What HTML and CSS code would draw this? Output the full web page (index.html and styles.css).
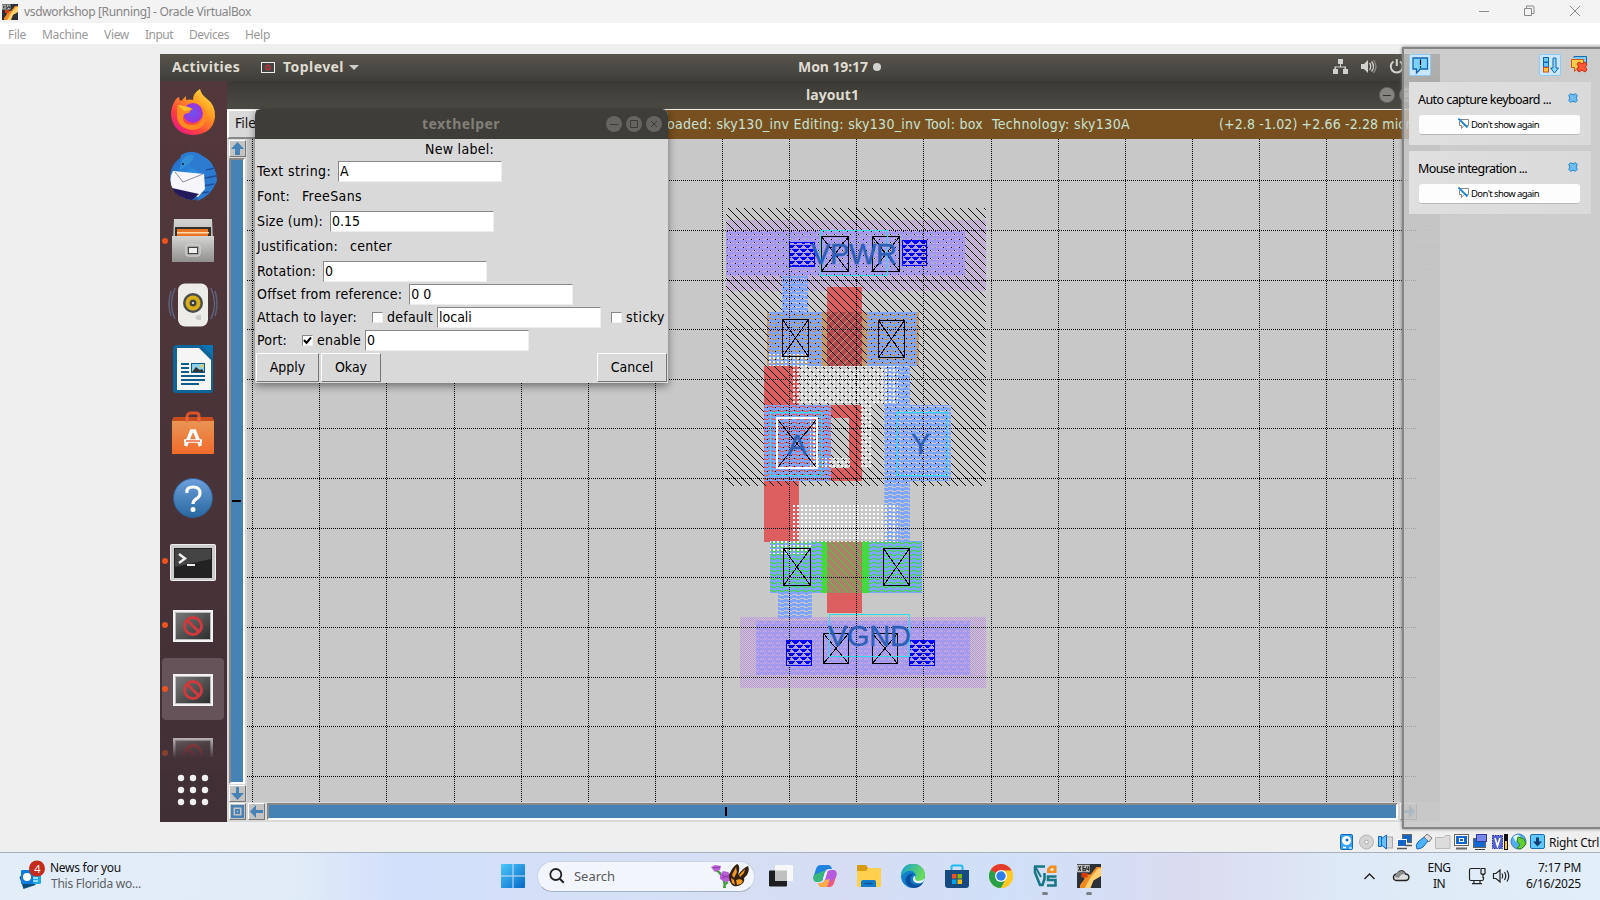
FILE: index.html
```html
<!DOCTYPE html>
<html lang="en">
<head>
<meta charset="utf-8">
<title>vsdworkshop [Running] - Oracle VirtualBox</title>
<link rel="stylesheet" href="styles.css">
</head>
<body>
<header class="titlebar">
  <svg class="app-icon" viewBox="0 0 16 16"><use href="#vm-icon"/></svg>
  <span class="title-text" data-w="227">vsdworkshop [Running] - Oracle VirtualBox</span>
  <svg class="win-controls" viewBox="0 0 120 22" fill="none" stroke="#8a8a8a"><path d="M9 10.500h10M54.500 7.500h7v7h-7zM56.500 7v-2h6.500q1 0 1 1v6.500h-2M100 5l10 10M110 5l-10 10"/></svg>
</header>
<nav class="menubar">
  <span data-w="18">File</span><span data-w="46">Machine</span><span data-w="25">View</span><span data-w="28">Input</span><span data-w="40">Devices</span><span data-w="25">Help</span>
</nav>
<main class="work">
  <section class="guest">
    <div class="gnome-bar">
      <span class="g-act" data-w="68">Activities</span>
      <svg class="g-app" viewBox="0 0 14 11"><rect x=".5" y=".5" width="13" height="10" fill="#444" stroke="#eee"/><circle cx="7" cy="5.500" r="2.500" fill="none" stroke="#d33"/><path d="M5.300 3.800l3.400 3.400" stroke="#d33"/></svg>
      <span class="g-top" data-w="61">Toplevel</span>
      <svg class="g-caret" viewBox="0 0 10 6"><path d="M0 0h10l-5 5z" fill="#ccc"/></svg>
      <span class="g-clock" data-w="70">Mon 19:17</span>
      <i class="g-dot"></i>
      <svg class="g-status" viewBox="0 0 80 20" fill="#d2d2cc"><path d="M6 2h5v5h-5zM1 12h5v5h-5zM11 12h5v5h-5zM8 7h1v2.500h5V12h-1.500v-1.500H4V12H2.500V9.500H8zM29 7h3l4-4v13l-4-4h-3z"/><path d="M37.500 6q2.500 3.500 0 7M39.500 4.500q4 5 0 10" fill="none" stroke="#d2d2cc" stroke-width="1.300"/><path d="M41.500 3q5 6.500 0 13" fill="none" stroke="#8c8c86" stroke-width="1.200"/><path d="M61.500 4.500a6 6 0 1 0 6.500 0" fill="none" stroke="#d2d2cc" stroke-width="2"/><path d="M63.800 2h2v7h-2z"/></svg>
    </div>
    <div class="guest-body">
      <aside class="dock">
        <svg viewBox="160 81 67 741" width="67" height="741">
          <defs>
            <linearGradient id="ff" x1="1" y1="0" x2=".2" y2="1"><stop offset="0" stop-color="#fff44f"/><stop offset=".4" stop-color="#ff9a20"/><stop offset=".75" stop-color="#ff4040"/><stop offset="1" stop-color="#e31587"/></linearGradient>
            <radialGradient id="fp"><stop offset="0" stop-color="#6a55f0"/><stop offset="1" stop-color="#a030d8"/></radialGradient>
            <linearGradient id="tb" x1="0" y1="0" x2="1" y2="1"><stop offset="0" stop-color="#1f5fc4"/><stop offset=".5" stop-color="#2d92e0"/><stop offset="1" stop-color="#1b3f94"/></linearGradient>
            <linearGradient id="gr" x1="0" y1="0" x2="0" y2="1"><stop offset="0" stop-color="#d4d4d2"/><stop offset="1" stop-color="#90908e"/></linearGradient>
            <linearGradient id="or" x1="0" y1="0" x2="0" y2="1"><stop offset="0" stop-color="#e89a58"/><stop offset="1" stop-color="#f06a2c"/></linearGradient>
            <linearGradient id="hb" x1="0" y1="0" x2="0" y2="1"><stop offset="0" stop-color="#6e9fdc"/><stop offset="1" stop-color="#27689f"/></linearGradient>
            <linearGradient id="dk" x1="0" y1="0" x2="1" y2="1"><stop offset="0" stop-color="#7a7a7a"/><stop offset="1" stop-color="#2c2c2c"/></linearGradient>
            <linearGradient id="fade" x1="0" y1="0" x2="0" y2="1"><stop offset="0" stop-color="#46323a" stop-opacity="0.100"/><stop offset="1" stop-color="#46323a"/></linearGradient>
            <g id="broken"><rect width="40" height="32" fill="#f2f2f2"/><rect x="2.500" y="2.500" width="35" height="27" fill="url(#dk)" stroke="#bbb"/><circle cx="20" cy="16" r="8.500" fill="none" stroke="#cf3a3e" stroke-width="3"/><path d="M14 10l12 12" stroke="#cf3a3e" stroke-width="3"/></g>
          </defs>
          <path d="M176 99q2-2 3-2 0 3 2 4l5-5v4q4-1 7 0 0-7 7-11 1 5 6 9 10 7 9 19-2 17-22 18-20-1-22-20 0-9 5-16z" fill="url(#ff)"/>
          <circle cx="193" cy="113" r="10" fill="url(#fp)"/>
          <path d="M177 107q7-3 16 2-3 1-4 4-5 0-6 4 0 9 11 8 10-2 9-12-1-6-5-9 8 3 9 11-1 14-15 15-15-2-15-15z" fill="#ff8a22"/>
          <path d="M177 105q7 0 15 4-3 2-8 2z" fill="#ffc02c"/>
          <circle cx="193" cy="177" r="23" fill="url(#tb)"/>
          <path d="M181 155q13-8 24 3 12 9 12 23-7 16-20 20 6-12 5-22-6-13-22-15z" fill="#2c7bd0"/>
          <path d="M206 170l9-2M205 178l11-2M203 186l11-2M201 193l8-1" stroke="#1c4f9d" stroke-width="1.500"/>
          <path d="M173 171l31 3 1 15-7 8-25-8q-5-9 0-18z" fill="#f6f6fa"/><path d="M175 172l8 10 20-8" fill="none" stroke="#8b90a3"/><path d="M172 188q5 10 20 12l7-6z" fill="#231a5c"/>
          <path d="M182 160q5-6 12-5-1 7-8 11l-7 5z" fill="#338fd6"/><circle cx="183" cy="164" r="1" fill="#123"/>
          <path d="M174 219h38l2 43h-42z" fill="url(#gr)"/><rect x="175" y="227" width="36" height="9" fill="#34302c"/><path d="M177 229h31v7h-31z" fill="#e87426"/><path d="M177 232h32v1.500h-32z" fill="#ffd9a8"/><path d="M172 236h42v26h-42z" fill="url(#gr)"/><rect x="186" y="245" width="14" height="11" rx="2" fill="#a5a5a3" stroke="#ddd"/><rect x="188.500" y="247.500" width="9" height="6" fill="#eee" stroke="#444"/>
          <g fill="none" stroke="#5d6079" stroke-width="1.500"><path d="M175 288q-7 16 0 31M171 291q-4 13 0 25M211 288q7 16 0 31M215 291q4 13 0 25"/></g>
          <rect x="178" y="283.500" width="30" height="43" rx="7" fill="#ecece8"/><circle cx="193" cy="303" r="10" fill="#4c4d4e"/><circle cx="193" cy="303" r="7.500" fill="#d9b116"/><circle cx="193" cy="303" r="3.500" fill="#444"/><circle cx="193" cy="303" r="1" fill="#fff"/><path d="M195 317q3-3 6-2v5q-4 1-6-3z" fill="#ccc"/>
          <path d="M176 345h25l12 12v33q0 3-3 3h-34q-3 0-3-3v-42q0-3 3-3z" fill="#0f6498"/><path d="M201 345h12v12z" fill="#0876b5"/><path d="M177 348h22l12 12v30h-34z" fill="#f5f5f5"/><g fill="#0e5c88"><path d="M181 363h8v2h-8zM181 367h8v2h-8zM181 371h8v2h-8zM181 375h24v2h-24zM181 379h24v2h-24zM181 383h18v2h-18z"/><path d="M191 363h14v10h-14z"/></g><path d="M192 364h12v8h-12z" fill="#8fd0ea"/><path d="M192 372l4-5 4 3 2-1 2 3z" fill="#333"/><circle cx="202" cy="366" r="1.500" fill="#f4d33a"/>
          <path d="M187 422v-6q1-3 4-3h5q3 0 3 3v6" fill="none" stroke="#d9532a" stroke-width="3"/><path d="M174 417h38l2 4v33h-42v-33z" fill="url(#or)"/><path d="M172 421l2-4h38l2 4z" fill="#c94d1c"/><path d="M187 422v-5M199 422v-5" stroke="#e8663a" stroke-width="3"/>
          <path d="M185.500 446l6-15h3l6 15M184 441h18" fill="none" stroke="#fff" stroke-width="3.500"/><path d="M186 441h14" stroke="#e8501f" stroke-width="1.300"/>
          <circle cx="193" cy="498" r="19.500" fill="url(#hb)" stroke="#2e5f94"/><path d="M187 493q-1-6 6-6 7 0 7 6 0 4-4 6-3 2-3 5" fill="none" stroke="#fff" stroke-width="3.200"/><circle cx="193" cy="509.500" r="2.500" fill="#fff"/>
          <rect x="170.500" y="544.500" width="45" height="36" rx="1" fill="#ccc" stroke="#eee"/><rect x="174" y="548" width="38" height="30" fill="#222"/><path d="M175 549h36v10l-36 8z" fill="#444"/><path d="M179 554l6 4.500-6 4.500" fill="none" stroke="#eee" stroke-width="2.500"/><path d="M187 564h8v2h-8z" fill="#eee"/>
          <use href="#broken" x="173" y="610"/>
          <rect x="162" y="658" width="62" height="62" rx="4" fill="#665259"/>
          <use href="#broken" x="173" y="674"/>
          <g opacity=".75"><use href="#broken" x="173" y="738"/></g><rect x="161" y="738" width="65" height="20" fill="url(#fade)"/><rect x="161" y="757" width="65" height="15" fill="#443138"/>
          <g fill="#e95420"><circle cx="165" cy="241" r="3"/><circle cx="165" cy="561" r="3"/><circle cx="165" cy="625" r="3"/><circle cx="165" cy="689" r="3"/><circle cx="165" cy="753" r="3" opacity=".4"/></g>
          <g fill="#f0f0f0"><circle cx="181" cy="778" r="3.200"/><circle cx="193" cy="778" r="3.200"/><circle cx="205" cy="778" r="3.200"/><circle cx="181" cy="790" r="3.200"/><circle cx="193" cy="790" r="3.200"/><circle cx="205" cy="790" r="3.200"/><circle cx="181" cy="802" r="3.200"/><circle cx="193" cy="802" r="3.200"/><circle cx="205" cy="802" r="3.200"/></g>
        </svg>
      </aside>
      <section class="magic">
        <div class="magic-title"><span data-w="53">layout1</span>
          <svg class="mt-buttons" viewBox="0 0 60 20"><g fill="#85847e" stroke="#5e5d58"><circle cx="10" cy="10" r="7.700"/><circle cx="30" cy="10" r="7.700"/><circle cx="50" cy="10" r="7.700"/></g><path d="M6 10.500h8M26.500 6.500h7v7h-7z" stroke="#33322e" fill="none"/></svg>
        </div>
        <div class="magic-menu">
          <div class="file-menu">File</div>
          <div class="status"><span class="st1" data-w="323">Loaded: sky130_inv Editing: sky130_inv Tool: box</span><span class="st2" data-w="138">Technology: sky130A</span><span class="st3" data-w="214">(+2.8 -1.02) +2.66 -2.28 microns</span></div>
        </div>
        <div class="magic-view">
          <div class="vbar">
            <div class="sbtn"><svg viewBox="0 0 13 13"><path d="M6.500 0l6.500 7H9v6H4V7H0z"/></svg></div>
            <div class="vtrough"><i></i></div>
            <div class="sbtn"><svg viewBox="0 0 13 13"><path d="M6.500 13L13 6H8V0H5v6H0z"/></svg></div>
          </div>
          <svg class="canvas" viewBox="247 139 1193 663" width="1193" height="663" shape-rendering="crispEdges">
            <defs>
              <pattern id="hatch" width="8" height="8" patternUnits="userSpaceOnUse"><path d="M0 0h1v1h-1zM1 1h1v1h-1zM2 2h1v1h-1zM3 3h1v1h-1zM4 4h1v1h-1zM5 5h1v1h-1zM6 6h1v1h-1zM7 7h1v1h-1z"/></pattern>
              <pattern id="ghatch" width="8" height="8" patternUnits="userSpaceOnUse"><path fill="#38d638" d="M0 0h1v1h-1zM1 1h1v1h-1zM2 2h1v1h-1zM3 3h1v1h-1zM4 4h1v1h-1zM5 5h1v1h-1zM6 6h1v1h-1zM7 7h1v1h-1z"/></pattern>
              <pattern id="thatch" width="8" height="8" patternUnits="userSpaceOnUse"><path fill="#c49a6c" d="M7 0h1v1h-1zM6 1h1v1h-1zM5 2h1v1h-1zM4 3h1v1h-1zM3 4h1v1h-1zM2 5h1v1h-1zM1 6h1v1h-1zM0 7h1v1h-1z"/></pattern>
              <pattern id="li" width="8" height="4" patternUnits="userSpaceOnUse"><path fill="#7fa5fa" d="M0 0h8v2h-8zM5 2h3v1h-3zM0 3h4v1h-4z"/></pattern>
              <pattern id="m1" width="2" height="2" patternUnits="userSpaceOnUse"><path fill="#be96e0" d="M0 0h1v1h-1zM1 1h1v1h-1z"/></pattern>
              <pattern id="rail" width="8" height="8" patternUnits="userSpaceOnUse"><rect width="8" height="8" fill="#a39aee"/><path fill="#d4aed8" d="M1 2h1v1h-1zM3 2h1v1h-1zM0 3h1v1h-1zM2 3h1v1h-1zM5 3h1v1h-1zM4 6h1v1h-1zM6 6h1v1h-1zM0 7h1v1h-1zM5 7h1v1h-1zM3 7h1v1h-1z"/></pattern>
              <pattern id="dotg" width="16" height="8" patternUnits="userSpaceOnUse"><path fill="#50c060" d="M3 3h1v1h-1zM7 7h1v1h-1zM11 3h1v1h-1z"/></pattern>
              <pattern id="dotk" width="8" height="8" patternUnits="userSpaceOnUse"><path d="M2 2h1v1h-1zM7 7h1v1h-1z"/></pattern>
              <pattern id="wd" width="4" height="4" patternUnits="userSpaceOnUse"><path fill="#fff" d="M1 1h2v2h-2z"/></pattern>
              <pattern id="tri" width="8" height="8" patternUnits="userSpaceOnUse"><path fill="#0000ff" d="M0 1h7v1h-7zM1 2h5v1h-5zM2 3h3v1h-3zM4 5h7v1h-7zM0 5h3v1h-3zM5 6h3v1h-3zM0 6h2v1h-2zM6 7h2v1h-2zM0 7h1v1h-1z"/></pattern>
            </defs>
            <rect x="247" y="139" width="1193" height="663" fill="#c8c8c8"/>
            <rect x="726" y="220" width="260" height="71" fill="url(#m1)"/>
            <path fill="#dc5e5e" d="M827 287h35v79h-35zM764 366h35v39h-35zM764 405h98v76h-98zM764 481h35v61h-35zM827 593h35v20h-35z"/>
            <path fill="#c8c8c8" d="M831 418h18v50h-18z"/>
            <path fill="#c49a6c" d="M767 312h60v54h-60zM862 312h57v54h-57z"/>
            <path fill="#b84850" d="M827 312h35v54h-35z"/><path fill="url(#thatch)" d="M827 312h35v54h-35z"/>
            <rect x="726" y="208" width="260" height="278" fill="url(#hatch)"/>
            <rect x="726" y="230" width="239" height="46" fill="url(#rail)"/><rect x="726" y="230" width="239" height="46" fill="url(#dotk)"/><rect x="776" y="234" width="160" height="36" fill="url(#dotg)"/>
            <path fill="#42da3e" d="M770 541h152v52h-152z"/><path fill="#ab8267" d="M827 541h35v52h-35z"/><path fill="url(#ghatch)" d="M827 541h35v52h-35z"/>
            <path fill="url(#li)" d="M782 276h26v36h-26zM769 312h53v54h-53zM867 312h50v54h-50zM884 366h26v39h-26zM764 405h67v76h-67zM884 405h67v76h-67zM884 481h26v60h-26zM770 541h52v52h-52zM869 541h53v52h-53zM778 593h34v26h-34z"/>
            <rect x="740" y="617" width="246" height="71" fill="url(#m1)"/><rect x="756" y="621" width="214" height="54" fill="url(#rail)"/>
            <path fill="url(#wd)" d="M769 354h40v12h-40zM793 366h105v39h-105zM810 418h8v50h-8zM818 458h32v10h-32zM861 405h10v62h-10zM793 505h105v37h-105zM770 541h41v13h-41z"/>
            <g fill="none" stroke="#000"><path d="M821.500 236.500h27v35h-27zl27 35m0-35l-27 35M872.500 236.500h27v35h-27zl27 35m0-35l-27 35M782.500 319.500h26v37h-26zl26 37m0-37l-26 37M878.500 320.500h26v37h-26zl26 37m0-37l-26 37M778 420l38 47m0-47l-38 47M783.500 548.500h27v37h-27zl27 37m0-37l-27 37M883.500 548.500h26v37h-26zl26 37m0-37l-26 37M823.500 633.500h25v30h-25zl25 30m0-30l-25 30M872.500 633.500h25v30h-25zl25 30m0-30l-25 30"/></g>
            <g fill="url(#tri)" stroke="#00f"><path d="M789.500 242.500h25v24h-25zM902.500 240.500h24v25h-24zM786.500 640.500h25v25h-25zM909.500 640.500h25v25h-25z"/></g>
            <path fill="none" stroke="#000" stroke-dasharray="1 1" d="M252.500 139V802M319.500 139V802M386.500 139V802M454.500 139V802M521.500 139V802M588.500 139V802M655.500 139V802M722.500 139V802M789.500 139V802M856.500 139V802M923.500 139V802M991.500 139V802M1058.500 139V802M1125.500 139V802M1192.500 139V802M1259.500 139V802M1326.500 139V802M1393.500 139V802M247 180.500H1416M247 230.500H1416M247 280.500H1416M247 329.500H1416M247 379.500H1416M247 428.500H1416M247 478.500H1416M247 528.500H1416M247 577.500H1416M247 627.500H1416M247 677.500H1416M247 726.500H1416M247 776.500H1416"/>
            <path fill="none" stroke="#30dce8" d="M820.500 230.500h67v45h-67zM770.500 412.500h51v63h-51zM896.500 412.500h51v63h-51zM829.500 614.500h80v42h-80z"/>
            <path fill="none" stroke="#fff" stroke-width="2" d="M777 418h40v50h-40z"/>
            <g class="lbl"><text x="811" y="264" textLength="86">VPWR</text><text x="787.500" y="455">A</text><text x="911" y="454">Y</text><text x="828" y="646" textLength="83">VGND</text></g>
            <g fill="none" stroke="#b4b4b4"><path d="M1418.500 139v87h19M1418.500 229.500h19v18h-19zM1418.500 251.500h19v18h-19z"/></g>
          </svg>
        </div>
        <div class="hbar">
          <div class="sbtn corner"><svg viewBox="0 0 13 13"><path fill-rule="evenodd" d="M0 0h13v13H0zM2.500 2.500v8h8v-8zM4 4h5v5H4zM5.800 5.800v1.400h1.400V5.800z"/></svg></div>
          <div class="sbtn"><svg viewBox="0 0 13 13"><path d="M0 6.500L6 0v5h7v3H6v5z"/></svg></div>
          <div class="htrough"><i></i></div>
          <div class="sbtn"><svg viewBox="0 0 13 13"><path d="M13 6.500L7 0v5H0v3h7v5z"/></svg></div>
        </div>
      </section>
    </div>
    <section class="dialog">
      <div class="dlg-title"><span data-w="78">texthelper</span>
        <svg class="dlg-buttons" viewBox="0 0 60 20"><g fill="#65645f"><circle cx="10" cy="10" r="8"/><circle cx="30" cy="10" r="8"/><circle cx="50" cy="10" r="8"/></g><path d="M6 10.500h8M26.500 6.500h7v7h-7zM47 7l6 6M53 7l-6 6" stroke="#3c3b37" fill="none"/></svg>
      </div>
      <div class="row head"><span data-w="69">New label:</span></div>
      <div class="row"><span data-w="74">Text string:</span><b class="entry">A</b></div>
      <div class="row tall"><span data-w="33">Font:</span><span class="val" data-w="60">FreeSans</span></div>
      <div class="row"><span data-w="66">Size (um):</span><b class="entry">0.15</b></div>
      <div class="row tall"><span data-w="81">Justification:</span><span class="val" data-w="42">center</span></div>
      <div class="row"><span data-w="59">Rotation:</span><b class="entry">0</b></div>
      <div class="row"><span data-w="145">Offset from reference:</span><b class="entry">0 0</b></div>
      <div class="row"><span data-w="100">Attach to layer:</span><i class="check"></i><span data-w="46">default</span><b class="entry tight">locali</b><i class="check second"></i><span data-w="39">sticky</span></div>
      <div class="row"><span data-w="30">Port:</span><i class="check"><svg viewBox="0 0 9 9"><path d="M1 4l2.500 3L8 1.500" fill="none" stroke="#000" stroke-width="2"/></svg></i><span data-w="44">enable</span><b class="entry tight">0</b></div>
      <div class="buttons"><div class="tk w63">Apply</div><div class="tk w60">Okay</div><div class="tk w70">Cancel</div></div>
    </section>
  </section>
  <div class="vb-status">
    <svg viewBox="1338 832 208 20" width="208" height="20">
      <g stroke-width="1">
      <rect x="1340.500" y="834.500" width="12" height="15" rx="1" fill="#38a4f0" stroke="#1267bb"/><circle cx="1346.500" cy="840.500" r="4.500" fill="#fff"/><circle cx="1347" cy="840" r="1.500" fill="#1267bb"/><path d="M1343 847.500h3M1349.500 848h2" stroke="#fff" stroke-width="1.500"/>
      <circle cx="1366.500" cy="842" r="7" fill="#d4d4d4" stroke="#b4b4b4"/><circle cx="1366.500" cy="842" r="1.800" fill="#fff" stroke="#aaa"/>
      <rect x="1385" y="837" width="7.500" height="11" fill="#d8d8d8" stroke="#aaa"/><path d="M1378.500 836.500h3v10h-3zM1381.500 838.500l5-3.500v14l-5-4z" fill="#67c0f8" stroke="#1267bb"/>
      <rect x="1402.500" y="834.500" width="9" height="8" fill="#1562c8" stroke="#666"/><rect x="1397.500" y="839.500" width="9" height="7" fill="#1562c8" stroke="#fff"/><path d="M1397 848.500h10M1405 845.500h7" stroke="#555" stroke-width="1.500"/>
      <path d="M1417 849q-2-4 1-7l6-5 4 4-5 6q-3 2-6 2z" fill="#4fb2f8" stroke="#1267bb"/><path d="M1424 837l3-3 5 4-3 4z" fill="#ddd" stroke="#777"/>
      <path d="M1435.500 848.500v-11h8l2-2h4.500v13z" fill="#dcdcdc" stroke="#bbb"/>
      <rect x="1454.500" y="834.500" width="14" height="11" fill="#fff" stroke="#666"/><rect x="1456" y="836" width="11" height="8" fill="#1668d0"/><rect x="1459.500" y="838.500" width="4" height="3" fill="#1668d0" stroke="#fff"/><path d="M1456 848.500h11" stroke="#666" stroke-width="2"/>
      <rect x="1473.500" y="838.500" width="12" height="9" fill="#1668d0" stroke="#666"/><rect x="1476.500" y="834.500" width="10" height="7" fill="#7788ea" stroke="#333c9c"/><path d="M1475 849.500h10" stroke="#444"/>
      <rect x="1492.500" y="835.500" width="10" height="13" fill="#5262d0" stroke="#27308f" stroke-dasharray="1.500 1"/><path d="M1495 838l2.500 8 2.500-8" fill="none" stroke="#fff" stroke-width="1.600"/><rect x="1504" y="834" width="4" height="16" fill="#111"/><rect x="1505" y="841" width="2" height="8" fill="#fc0"/>
      <circle cx="1518.500" cy="841.500" r="7.500" fill="#54aee8" stroke="#3a7ec0"/><path d="M1513 837q4-4 7-1l-4 6z" fill="#d8f1ff"/><path d="M1518 837l6 2 2 5-5 5-4-1 3-3-3-4z" fill="#63cf35" stroke="#2e8614"/>
      <rect x="1530.500" y="834.500" width="14" height="14" rx="1.500" fill="#62c7fb" stroke="#1b6dad"/><path d="M1536 837.500h3v4h3l-4.500 5-4.500-5h3z" fill="#113d70"/>
      </g>
    </svg>
    <span data-w="50">Right Ctrl</span>
  </div>
  <aside class="notes">
    <div class="notes-head">
      <div class="nbtn"><svg viewBox="1 1 20 20"><path d="M4 4h14.500v11h-7l-4 4v-4H4z" fill="#7ad4fa" stroke="#1566ad" stroke-width="1.300"/><path d="M11.500 5.500v5.500M11.500 12.300v1.500" stroke="#000" stroke-width="1.200"/></svg></div>
      <div class="nbtn n2"><svg viewBox="1 1 20 20"><rect x="4.500" y="3.500" width="5" height="4.500" fill="#6cc8f4" stroke="#1566ad"/><rect x="4.500" y="8.500" width="5" height="4.500" fill="#6cc8f4" stroke="#1566ad"/><rect x="4.500" y="13.500" width="5" height="4.500" fill="#ffc23a" stroke="#d2501c"/><path d="M14 4h3v10h2.500L15.500 19l-4-5H14z" fill="#8bd8fb" stroke="#1566ad"/></svg></div>
      <svg class="nclear" viewBox="0 0 18 18"><path d="M4 3V1.500h12.500v7H14" fill="#7bcdf5" stroke="#1566ad"/><path d="M1.500 4.500h12v8h-6l-3 4v-4h-3z" fill="#ffcb4a" stroke="#cd5a14"/><path d="M7 9l2-2 3 2L15 7l2 2-1.500 3 1.500 3-2 2-3-2-3 2-2-2 2-3z" fill="#ff5a3a" stroke="#d3260e"/></svg>
    </div>
    <div class="card"><div class="ctitle"><span data-w="133">Auto capture keyboard ...</span><svg viewBox="0 0 10 10"><use href="#xmark"/></svg></div><div class="cbtn"><svg viewBox="0 0 11 11"><use href="#nomsg"/></svg><span data-w="68">Don't show again</span></div></div>
    <div class="card"><div class="ctitle"><span data-w="109">Mouse integration ...</span><svg viewBox="0 0 10 10"><use href="#xmark"/></svg></div><div class="cbtn"><svg viewBox="0 0 11 11"><use href="#nomsg"/></svg><span data-w="68">Don't show again</span></div></div>
  </aside>
</main>
<footer class="taskbar">
  <div class="news">
    <svg viewBox="18 856 30 36" width="30" height="36"><path d="M19.500 875l3-2 13 8v2l-12 4z" fill="#0b4e7c"/><rect x="21" y="868" width="20" height="14" rx="1.500" fill="#22a8dd"/><path d="M21 869.500q0-1.500 1.500-1.500h11v14h-11q-1.500 0-1.500-1.500z" fill="#117bd8"/><circle cx="27" cy="875" r="4" fill="#fff"/><path d="M33 876h5M33 879h5" stroke="#b9effb" stroke-width="1.500"/><circle cx="37" cy="866.500" r="8" fill="#c42b1c"/><text class="badge" x="37.500" y="870.500">4</text></svg>
    <div class="ntext"><span data-w="71">News for you</span><span class="dim" data-w="90">This Florida wo...</span></div>
  </div>
  <svg class="start" viewBox="0 0 24 24"><defs><linearGradient id="wn" x1="0" y1="0" x2="1" y2="1"><stop offset="0" stop-color="#4cc8fa"/><stop offset="1" stop-color="#0668c8"/></linearGradient></defs><path fill="url(#wn)" d="M1 0h10.500v11.500H0V1q0-1 1-1zM12.500 0H23q1 0 1 1v10.500H12.500zM0 12.500h11.500V24H1q-1 0-1-1zM12.500 12.500H24V23q0 1-1 1H12.500z"/></svg>
  <div class="search">
    <svg class="mag" viewBox="0 0 16 16"><circle cx="6.800" cy="6.500" r="5.500" fill="none" stroke="#222" stroke-width="1.800"/><path d="M10.800 10.800l4 4" stroke="#222" stroke-width="2"/></svg>
    <span data-w="41">Search</span>
    <svg class="bfly" viewBox="0 0 38 26"><path d="M5 7q8 4 9 18M13 25q0-4 4-6" stroke="#3f9a34" stroke-width="2" fill="none"/><path d="M0 4l4-2 6 1-1 4-5 2zM9 12l3-4 5 1 3 3v6l-6 1-5-3z" fill="#b95fd5"/><path d="M2 5l7-1M11 12l8 3M11 15l8-3" stroke="#8d37ab"/><path d="M18 12q4-9 8-11 3 1 2 7l-1 4q5-7 10-9 2 4-1 9l-3 3q1 4-2 6-4 3-8 2-5-2-5-11z" fill="#33210f"/><path d="M21 12l4-8 1 5-3 6zM28 12l6-6-1 4-4 4zM20 15l3 2 1 5-3-2zM25 17l4-1 3 2-2 3-4 1z" fill="#ef9a22"/></svg>
  </div>
  <div class="apps">
    <svg viewBox="0 0 24 24"><rect x="0" y="6.500" width="18" height="16" rx="1" fill="#1e1e1e"/><rect x="6" y="1" width="18" height="16" rx="1" fill="#f8f8f8"/><path d="M6 6.500h12V17H6z" fill="#c0c0c0"/></svg>
    <svg viewBox="0 0 24 24"><path d="M8 1h7q3 0 4 4h-4q-2 0-3 3l-3 9H3q-4-1-2-6l2-6q1-4 5-4z" fill="#1f83e0"/><path d="M1 11q-2 6 2 7h3q3 0 4-4l2-7q1-2 3-2z" fill="#38b77c"/><path d="M16 23H9q-3 0-4-4h4q2 0 3-3l3-9h6q4 1 2 6l-2 6q-1 4-5 4z" fill="#ed5a7c"/><path d="M23 13q2-6-2-7h-3q-3 0-4 4l-2 7q-1 2-3 2 8 1 14-6z" fill="#b65be0"/><path d="M5 19h4q2 0 3-3l5-1-3 8H9q-3 0-4-4z" fill="#ffac45"/><path d="M12 8l-2 7h2l2-7z" fill="#eef2fb"/></svg>
    <svg viewBox="0 0 24 24"><path d="M1 1h8l2 3H24v9H0V2q0-1 1-1z" fill="#d89a13"/><path d="M0 7h9l2-3h12q1 0 1 1v17q0 1-1 1H1q-1 0-1-1z" fill="#ffd04d"/><path d="M4 23v-5q0-2 2-2h11q2 0 2 2v5z" fill="#117bc9"/><path d="M7.500 19.500h8" stroke="#0b5590" stroke-width="1.500"/></svg>
    <svg viewBox="0 0 24 24"><defs><linearGradient id="eg" x1="0" y1="0" x2="1" y2=".4"><stop offset="0" stop-color="#159ed8"/><stop offset="1" stop-color="#67dc58"/></linearGradient></defs><circle cx="12" cy="12" r="12" fill="#117fcb"/><path d="M0 12A12 12 0 0 1 24 11q0 6-6 6-5 0-4-3 2-3-1-6-6-4-13 4z" fill="url(#eg)"/><path d="M13 10q-5 3-3 8 3 5 12 1-5 7-13 4-6-4-4-9 2-5 8-4z" fill="#0c4f9e"/><path d="M14 14q0 3 4 3 3 0 6-3-1 4-4 5-6 1-8-3 0-4 2-4 1 0 0 2z" fill="#e7f0fb"/></svg>
    <svg viewBox="0 0 24 24"><path d="M6.500 6V3q0-1.500 1.500-1.500h8q1.500 0 1.500 1.500v3" fill="none" stroke="#20bbf1" stroke-width="2"/><path d="M0 6h24v15q0 3-3 3H3q-3 0-3-3z" fill="#174a80"/><path d="M7 10h4.500v4.500H7z" fill="#f25022"/><path d="M12.500 10H17v4.500h-4.500z" fill="#7fba00"/><path d="M7 15.500h4.500V20H7z" fill="#00a4ef"/><path d="M12.500 15.500H17V20h-4.500z" fill="#ffb900"/></svg>
    <svg viewBox="0 0 24 24"><circle cx="12" cy="12" r="12" fill="#fc3"/><path d="M12 12L1.600 6A12 12 0 0 1 22.400 6z" fill="#e33b2e"/><path d="M1.600 6A12 12 0 0 0 12 24l5-9-5-3z" fill="#28a04a"/><path d="M12 6.500h10.700A12 12 0 0 1 12 24l5-9z" fill="#fdc922"/><circle cx="12" cy="12" r="6" fill="#fff"/><circle cx="12" cy="12" r="4.700" fill="#2f7de8"/></svg>
    <svg viewBox="0 0 24 24"><path d="M1 2.500h11M2 2.500v6l5 12.500h2.500l2-6V9" fill="none" stroke="#197886" stroke-width="2.600"/><path d="M3 4l5 9" stroke="#197886" stroke-width="2"/><path d="M14 9V5l3-3.500h6.500V9z" fill="#f09022"/><path d="M18 4.500h2.500v2h-3.500z" fill="#fff"/><path d="M23.500 12.500H15v3.500h7.500v5.500H14" fill="none" stroke="#197886" stroke-width="2.600"/></svg>
    <svg viewBox="0 0 16 16"><use href="#vm-icon"/></svg>
    <i class="run r1"></i><i class="run r2"></i>
  </div>
  <div class="tray">
    <svg viewBox="1360 862 52 28" width="52" height="28"><path d="M1364.500 879l5-5 5 5" fill="none" stroke="#222" stroke-width="1.400"/><path d="M1396 880.500q-3-1-2.500-4 1-2.500 3.500-2.500 2-4 6-3 2 1 2.500 3 3 0 3.500 3 0 3-3 3.500z" fill="#ddd" stroke="#222" stroke-width="1.300"/><path d="M1395 877q1-6 7-6 3 1 3 3-5 0-6 4z" fill="#8c8c8c"/></svg>
    <div class="lang"><span data-w="23">ENG</span><span data-w="12">IN</span></div>
    <svg viewBox="1467 864 46 24" width="46" height="24" fill="none" stroke="#222" stroke-width="1.200"><path d="M1480 868.500h-9q-1.500 0-1.500 1.500v9q0 1.500 1.500 1.500h11q1.500 0 1.500-1.500V877M1474 881v2.500M1480 881v2.500M1472 883.700h10M1481 868.500h4v5q-2 2-4 0zM1483 874v4M1493.500 873.500h2.500l4-3.500v12l-4-3.500h-2.500zM1502 873.500q1.500 2.500 0 5M1504.500 872q2.500 4 0 8M1507 870.500q3.500 5.500 0 11"/></svg>
    <div class="clock"><span data-w="43">7:17 PM</span><span data-w="55">6/16/2025</span></div>
  </div>
</footer>
<svg class="defs" width="0" height="0">
  <symbol id="vm-icon" viewBox="0 0 16 16"><rect width="16" height="16" fill="#2d3038"/><path d="M4 7h5l4-5h3v5h-3l-4 4-4 5H2v-2l3-4z" fill="#f08a1e"/><path d="M16 3h-2l-5 6-4 7h4l2-5 5-3z" fill="#ffcf70"/><path d="M3 6h4v3H3z" fill="#d73a10"/><path d="M0 .5h8.500v5H0z" fill="#bfbfbf"/><path d="M1 1.500l1.500 3M2.500 1.500L1 4.500M5 1.500h-1v3h1.500v-1.500h-1.500M6.500 1.500v2h1.500M7.800 1.500v3" stroke="#222" stroke-width=".7" fill="none"/></symbol>
  <symbol id="xmark" viewBox="0 0 10 10"><path d="M.7 2.500l1.800-1.800L5 1.800 7.500.7l1.800 1.800L8.200 5l1.100 2.500-1.800 1.800L5 8.200 2.500 9.300.7 7.500 1.800 5z" fill="#6dbdf0" stroke="#2f86c9"/></symbol>
  <symbol id="nomsg" viewBox="0 0 11 11"><path d="M2 1.500h8.500v6H6l-2.500 3v-3H1.500V3" fill="#fff" stroke="#888"/><path d="M.5.5l9 9" stroke="#1f86d8" stroke-width="1.800"/></symbol>
</svg>
<script src="fit.js"></script>
</body>
</html>
```

FILE: styles.css
```css
* { box-sizing: border-box; }
body { margin: 0; width: 1600px; height: 900px; overflow: hidden; display: flex; flex-direction: column; background: #efefef; font: 12px "Noto Sans", "Open Sans", sans-serif; color: #111; }
span { white-space: pre; }
svg { display: block; flex: none; }
.defs { position: absolute; }
.titlebar { height: 23px; flex: none; display: flex; align-items: center; background: #f3f3f3; padding-left: 2px; color: #858585; }
.app-icon { width: 16px; height: 16px; margin-right: 6px; }
.title-text { padding-bottom: 1px; }
.win-controls { width: 120px; height: 22px; margin-left: auto; margin-right: 10px; }
.menubar { height: 21px; flex: none; display: flex; align-items: center; gap: 16px; padding: 1px 0 0 8px; background: #fff; color: #999; }
.work { position: relative; height: 808px; flex: none; padding: 10px 0 0 160px; }
.guest { position: relative; width: 1280px; height: 768px; display: flex; flex-direction: column; overflow: hidden; }
.gnome-bar { height: 27px; flex: none; display: flex; align-items: center; background: linear-gradient(#57554c, #3f3e39); color: #dfdbd2; font: bold 14px "Noto Sans", sans-serif; }
.gnome-bar span, .magic-title span, .dlg-title span { padding-bottom: 2px; }
.g-act { margin-left: 12px; }
.g-app { width: 14px; height: 11px; margin-left: 21px; }
.g-top { margin-left: 8px; }
.g-caret { width: 10px; height: 6px; margin-left: 5px; }
.g-clock { margin-left: 439px; }
.g-dot { width: 8px; height: 8px; border-radius: 50%; background: #d2d2cc; margin: 0 0 1px 5px; }
.g-status { width: 80px; height: 20px; margin: 0 0 1px 451px; }
.guest-body { display: flex; flex: 1; }
.dock { width: 67px; background: linear-gradient(#53383b, #402f35); }
.magic { width: 1213px; display: flex; flex-direction: column; background: #d9d9d9; }
.magic-title { height: 28px; display: flex; align-items: center; background: linear-gradient(#3a3934, #4b4a43); color: #dfdbd2; font: bold 14px "Noto Sans", sans-serif; padding-left: 579px; }
.mt-buttons { width: 60px; height: 20px; margin-left: 518px; }
.magic-menu { height: 30px; display: flex; border-top: 1px solid #eee; font: 14px "DejaVu Sans Condensed", "DejaVu Sans", sans-serif; font-stretch: condensed; }
.file-menu { width: 29px; flex: none; padding: 4px 0 0 6px; border: solid #fff; border-width: 1px 0 0 2px; border-bottom: 2px solid #888; background: #d9d9d9; }
.status { flex: 1; display: flex; align-items: center; background: #78501f; color: #c6e3d6; padding: 0 0 1px 404px; }
.st2 { margin-left: 9px; }
.st3 { margin-left: 89px; }
.magic-view { height: 663px; display: flex; }
.vbar { width: 20px; background: #d9d9d9; display: flex; flex-direction: column; align-items: center; padding-top: 1px; gap: 1px; }
.sbtn { width: 17px; height: 17px; flex: none; background: #c3c3c3; border: 1px solid; border-color: #fff #777 #777 #fff; display: grid; place-items: center; fill: #4682b4; }
.sbtn svg { width: 13px; height: 13px; }
.vtrough { width: 16px; flex: 1; border: 2px solid; border-color: #888 #fff #fff #888; background: #4682b4; padding: 340px 0 0 1px; }
.vtrough i { display: block; width: 9px; height: 2px; background: #000; }
.hbar { height: 20px; display: flex; align-items: center; padding: 0 0 1px 2px; gap: 2px; }
.htrough { width: 1131px; height: 17px; border: 2px solid; border-color: #888 #fff #fff #888; background: #4682b4; padding: 2px 0 0 456px; }
.htrough i { display: block; width: 2px; height: 9px; background: #000; }
.lbl { font: 29px "Liberation Sans", sans-serif; fill: #2c60b8; stroke: #2c60b8; stroke-width: .4px; }
.dialog { position: absolute; left: 95px; top: 55px; width: 413px; height: 274px; background: #d9d9d9; border-radius: 6px 6px 0 0; box-shadow: 0 3px 9px rgba(0,0,0,.45); font: 14px "DejaVu Sans Condensed", "DejaVu Sans", sans-serif; font-stretch: condensed; color: #000; }
.dlg-title { height: 30px; border-radius: 6px 6px 0 0; background: #3e3d39; color: #817f78; font: bold 14px "Noto Sans", sans-serif; display: flex; align-items: center; padding-left: 167px; }
.dlg-buttons { width: 60px; height: 20px; margin-left: 104px; }
.row { height: 23px; display: flex; align-items: center; padding-left: 2px; }
.row span { padding-bottom: 1px; }
.row.head { height: 21px; padding: 0 0 0 170px; }
.row.tall { height: 27px; }
.val { margin-left: 12px; }
.entry { width: 164px; height: 21px; margin-left: 7px; background: #fff; border: 1px solid; border-color: #888 #eee #eee #888; padding: 1px 0 0 1px; font-weight: normal; line-height: 17px; }
.entry.tight { margin-left: 4px; }
.check { width: 11px; height: 11px; background: #fff; border: 1px solid; border-color: #888 #eee #eee #888; margin: 0 4px 0 15px; }
.check.second { margin-left: 10px; }
.buttons { height: 31px; display: flex; align-items: center; gap: 2px; padding-left: 1px; }
.tk { height: 29px; border: 1px solid; border-color: #fff #777 #777 #fff; display: grid; place-items: center; padding-bottom: 1px; }
.w63 { width: 63px; }
.w60 { width: 60px; }
.w70 { width: 70px; margin-left: 214px; }
.vb-status { position: absolute; right: 0; bottom: 0; width: 262px; height: 20px; display: flex; align-items: center; gap: 3px; color: #111; }
.notes { position: absolute; left: 1402px; top: 3px; width: 200px; height: 782px; border: 2px solid #858585; background: rgba(197,197,197,.82); box-shadow: 0 0 3px #777; padding: 5px 0 0 5px; display: flex; flex-direction: column; gap: 6px; }
.notes-head { height: 22px; display: flex; }
.nbtn { width: 22px; height: 22px; background: #c9e6fb; border: 1px solid #92cbf2; border-radius: 2px; }
.nbtn svg { width: 20px; height: 20px; }
.n2 { margin-left: 108px; }
.nclear { width: 18px; height: 18px; margin: 1px 0 0 9px; }
.card { width: 182px; height: 63px; background: linear-gradient(90deg, #dfdfdf, #dadada); padding: 7px 10px 0 9px; }
.ctitle { height: 20px; display: flex; align-items: center; justify-content: space-between; font-size: 12.500px; color: #000; }
.ctitle svg { width: 10px; height: 10px; margin: 0 3px 2px 0; }
.cbtn { width: 161px; height: 20px; margin: 6px 0 0 1px; background: #fdfdfd; border-radius: 3px; border-bottom: 1px solid #b8b8b8; display: flex; align-items: center; justify-content: center; gap: 2px; font-size: 9.500px; color: #000; padding-right: 2px; }
.cbtn svg { width: 11px; height: 11px; margin-bottom: 2px; }
.taskbar { position: relative; height: 48px; flex: none; border-top: 1px solid #a9b1bf; background: linear-gradient(90deg, #e3edf8 0, #e2ecf8 290px, #d1dffa 400px, #d5e0f6 600px, #d6ddf2 850px, #d0e0f8 1000px, #dadcf0 1200px, #dee9f7 1340px, #e2eef8 1600px); display: flex; align-items: center; padding-bottom: 1px; }
.news { width: 483px; display: flex; align-items: center; padding-left: 18px; gap: 2px; }
.ntext { display: flex; flex-direction: column; align-items: flex-start; line-height: 16px; }
.dim { color: #5c6066; padding-left: 1px; }
.badge { font: 11px "Noto Sans", sans-serif; fill: #fff; text-anchor: middle; }
.start { width: 24px; height: 24px; margin-left: 18px; }
.search { width: 218px; height: 31px; margin-left: 12px; border-radius: 16px; background: #f2f5fc; border: 1px solid #ccd3e3; border-bottom-color: #a8b2c6; display: flex; align-items: center; padding-left: 11px; color: #5a5a5a; font-size: 13px; }
.mag { width: 16px; height: 16px; margin-right: 9px; }
.bfly { width: 38px; height: 26px; margin-left: 96px; }
.apps { position: relative; display: flex; gap: 20px; margin-left: 14px; }
.apps svg { width: 24px; height: 24px; }
.run { position: absolute; top: 28px; width: 6px; height: 3px; border-radius: 2px; background: #7c8088; }
.r1 { left: 273px; }
.r2 { left: 317px; }
.tray { margin-left: auto; margin-right: 19px; display: flex; align-items: center; }
.lang { display: flex; flex-direction: column; align-items: center; line-height: 16px; width: 24px; margin: 0 16px 0 15px; }
.clock { width: 68px; display: flex; flex-direction: column; align-items: flex-end; line-height: 16px; }
```

FILE: fit.js
```javascript
// Tracks each label so that it fills the width given in data-w.
document.querySelectorAll('[data-w]').forEach(function (el) {
  var target = Number(el.dataset.w);
  var range = document.createRange();
  range.selectNodeContents(el);
  var natural = range.getBoundingClientRect().width;
  el.style.letterSpacing = (target - natural) / el.textContent.length + 'px';
});
```
